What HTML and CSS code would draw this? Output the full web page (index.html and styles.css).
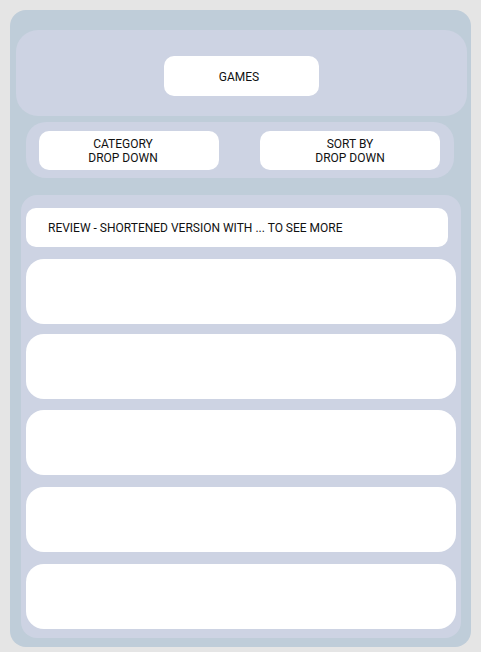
FILE: index.html
```html
<!DOCTYPE html>
<html>
<head>
<meta charset="utf-8">
<link rel="stylesheet" href="styles.css">
</head>
<body>
<div class="panel">
  <div class="header">
    <div class="title-btn">GAMES</div>
  </div>
  <div class="filters">
    <div class="dropdown dropdown-category">CATEGORY<br>DROP DOWN</div>
    <div class="dropdown">SORT BY<br>DROP DOWN</div>
  </div>
  <div class="list">
    <div class="review">REVIEW - SHORTENED VERSION WITH ... TO SEE MORE</div>
    <div class="card"></div>
    <div class="card gap-s"></div>
    <div class="card"></div>
    <div class="card gap-l"></div>
    <div class="card gap-l"></div>
  </div>
</div>
</body>
</html>
```
FILE: styles.css
```css
html, body {
  margin: 0;
  padding: 0;
}
body {
  background: #e5e5e5;
  font-family: Roboto, "Liberation Sans", sans-serif;
  font-size: 12px;
  color: #111;
  width: 481px;
  height: 652px;
  overflow: hidden;
}
.panel {
  margin: 10px 0 0 10px;
  width: 461px;
  height: 637px;
  box-sizing: border-box;
  background: #bfcdd9;
  border-radius: 16px;
  padding-top: 20px;
  display: flex;
  flex-direction: column;
}
.header {
  margin: 0 4px 0 6px;
  height: 86px;
  box-sizing: border-box;
  background: #cdd3e3;
  border-radius: 22px;
  display: flex;
  justify-content: center;
  padding-top: 26px;
}
.title-btn {
  width: 155px;
  height: 40px;
  box-sizing: border-box;
  padding: 2px 5px 0 0;
  background: #fff;
  border-radius: 10px;
  display: flex;
  align-items: center;
  justify-content: center;
}
.filters {
  margin: 6px 17px 0 16px;
  height: 56px;
  box-sizing: border-box;
  background: #cdd3e3;
  border-radius: 20px;
  display: flex;
  justify-content: space-between;
  align-items: flex-start;
  padding: 9px 14px 0 13px;
}
.dropdown {
  width: 180px;
  height: 39px;
  box-sizing: border-box;
  background: #fff;
  border-radius: 10px;
  display: flex;
  align-items: center;
  justify-content: center;
  text-align: center;
  line-height: 14px;
}
.dropdown-category {
  padding-right: 12px;
}
.list {
  margin: 17px 10px 0 11px;
  height: 443px;
  box-sizing: border-box;
  background: #cdd3e3;
  border-radius: 16px;
  padding: 13px 5px 0 5px;
  display: flex;
  flex-direction: column;
}
.review {
  margin-right: 8px;
  height: 39px;
  background: #fff;
  border-radius: 10px;
  display: flex;
  align-items: center;
  padding-left: 22px;
}
.card {
  height: 65px;
  background: #fff;
  border-radius: 18px;
  margin-top: 11px;
}
.review + .card {
  margin-top: 12px;
}
.card.gap-s {
  margin-top: 10px;
}
.card.gap-l {
  margin-top: 12px;
}
```
